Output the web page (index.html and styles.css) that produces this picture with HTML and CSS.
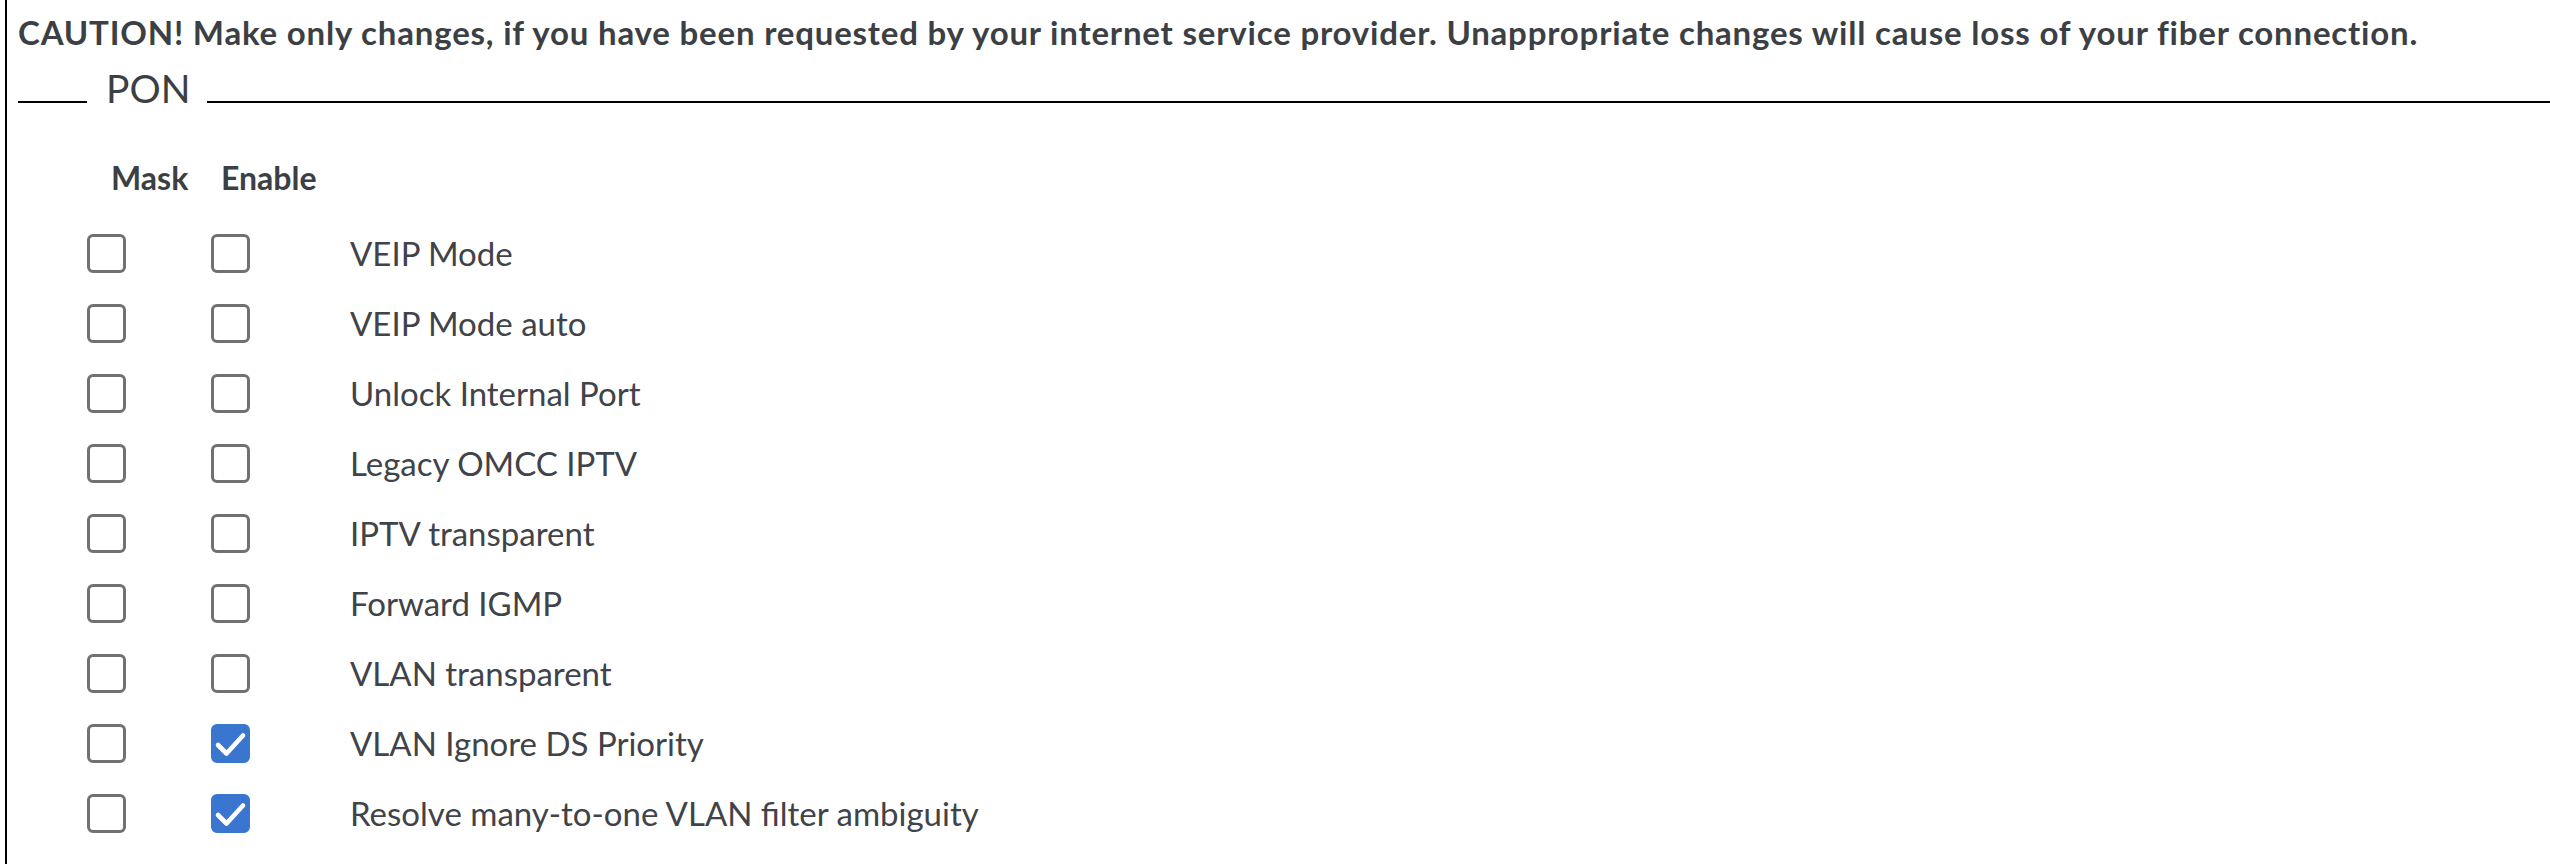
FILE: index.html
```html
<!DOCTYPE html>
<html lang="en">
<head>
<meta charset="utf-8">
<title>PON</title>
<link rel="stylesheet" href="styles.css">
</head>
<body>
<div class="page">
  <p class="caution">CAUTION! Make only changes, if you have been requested by your internet service provider. Unappropriate changes will cause loss of your fiber connection.</p>
  <div class="legend-row">
    <div class="seg-left"></div>
    <span class="legend">PON</span>
    <div class="seg-right"></div>
  </div>
  <div class="grid">
    <div class="head head-mask">Mask</div>
    <div class="head head-enable">Enable</div>
    <div class="head"></div>

    <div class="cell"><span class="box"></span></div>
    <div class="cell"><span class="box"></span></div>
    <div class="label">VEIP Mode</div>

    <div class="cell"><span class="box"></span></div>
    <div class="cell"><span class="box"></span></div>
    <div class="label">VEIP Mode auto</div>

    <div class="cell"><span class="box"></span></div>
    <div class="cell"><span class="box"></span></div>
    <div class="label">Unlock Internal Port</div>

    <div class="cell"><span class="box"></span></div>
    <div class="cell"><span class="box"></span></div>
    <div class="label">Legacy OMCC IPTV</div>

    <div class="cell"><span class="box"></span></div>
    <div class="cell"><span class="box"></span></div>
    <div class="label">IPTV transparent</div>

    <div class="cell"><span class="box"></span></div>
    <div class="cell"><span class="box"></span></div>
    <div class="label">Forward IGMP</div>

    <div class="cell"><span class="box"></span></div>
    <div class="cell"><span class="box"></span></div>
    <div class="label">VLAN transparent</div>

    <div class="cell"><span class="box"></span></div>
    <div class="cell"><span class="box checked"><svg viewBox="0 0 39 39" width="39" height="39"><path d="M7 21 L15.5 29.5 L32 11.5" fill="none" stroke="#fff" stroke-width="4.6" stroke-linecap="round" stroke-linejoin="round"/></svg></span></div>
    <div class="label">VLAN Ignore DS Priority</div>

    <div class="cell"><span class="box"></span></div>
    <div class="cell"><span class="box checked"><svg viewBox="0 0 39 39" width="39" height="39"><path d="M7 21 L15.5 29.5 L32 11.5" fill="none" stroke="#fff" stroke-width="4.6" stroke-linecap="round" stroke-linejoin="round"/></svg></span></div>
    <div class="label">Resolve many-to-one VLAN filter ambiguity</div>
  </div>
</div>
</body>
</html>
```

FILE: styles.css
```css
html, body {
  margin: 0;
  padding: 0;
  background: #fff;
}

body {
  font-family: Lato, "Liberation Sans", sans-serif;
  color: #3c3f44;
  overflow: hidden;
}

.page {
  margin-left: 5px;
  border-left: 2px solid #000;
  min-height: 864px;
  padding-left: 11px;
  box-sizing: border-box;
}

.caution {
  margin: 0;
  padding-top: 15px;
  font-size: 33px;
  font-weight: 700;
  letter-spacing: 0.8px;
  line-height: 34px;
  white-space: nowrap;
}

.legend-row {
  display: flex;
  align-items: baseline;
  margin-top: 19px;
}

.seg-left {
  width: 69px;
  border-bottom: 2px solid #000;
}

.seg-right {
  flex: 1;
  border-bottom: 2px solid #000;
}

.legend {
  font-size: 39px;
  line-height: 40px;
  padding: 0 17px 0 19px;
  font-weight: 400;
}

.grid {
  display: grid;
  grid-template-columns: 124px 139px 1fr;
  grid-template-rows: 60px;
  grid-auto-rows: 70px;
  margin-left: 69px;
  margin-top: 50px;
}

.head {
  font-size: 32px;
  font-weight: 700;
  line-height: 40px;
}

.head-mask {
  padding-left: 24px;
}

.head-enable {
  padding-left: 10px;
}

.cell {
  display: flex;
  align-items: center;
}

.box {
  display: block;
  width: 39px;
  height: 39px;
  box-sizing: border-box;
  border: 3px solid #717171;
  border-radius: 6px;
  background: #fff;
  position: relative;
}

.box.checked {
  background: #3a76d0;
  border-color: #3a76d0;
}

.box svg {
  position: absolute;
  left: -3px;
  top: -3px;
}

.label {
  display: flex;
  align-items: center;
  font-size: 33px;
  font-weight: 400;
  color: #404349;
}
```
